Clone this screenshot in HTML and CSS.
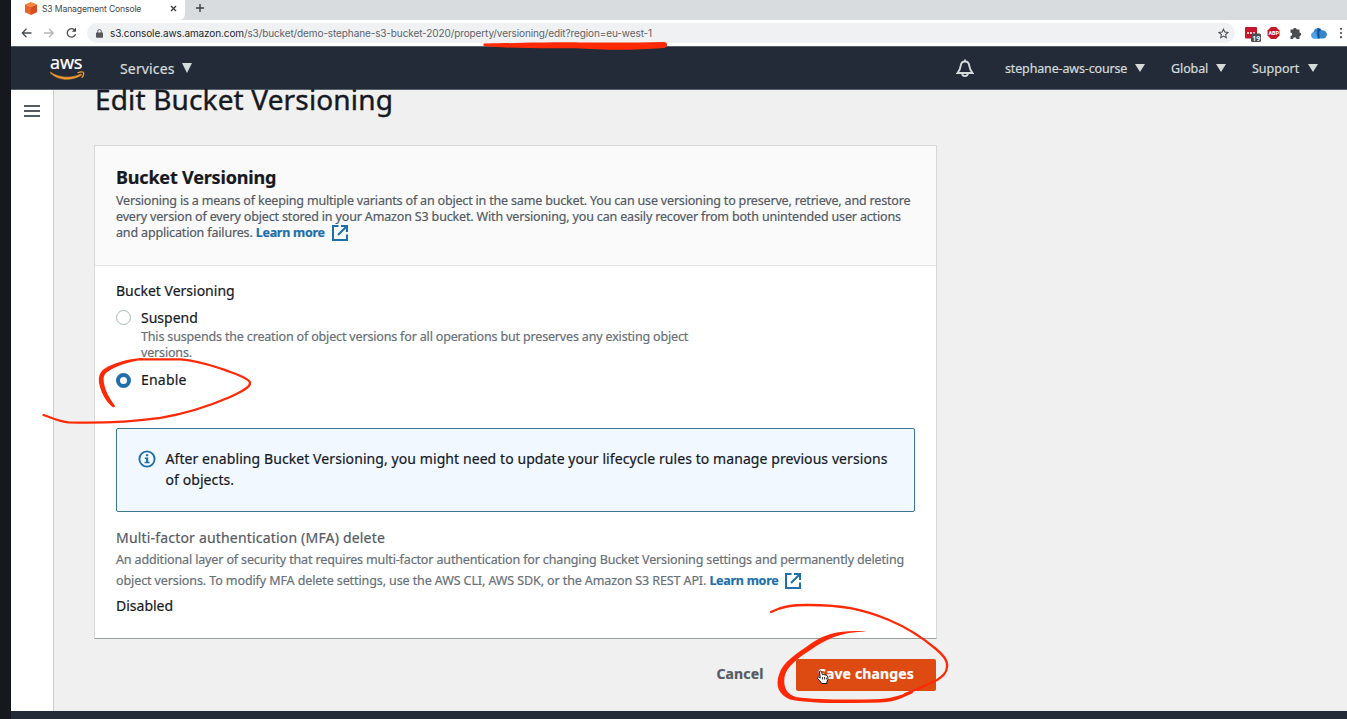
FILE: index.html
```html
<!DOCTYPE html>
<html lang="en">
<head>
<meta charset="utf-8">
<title>S3 Management Console</title>
<link rel="stylesheet" href="styles.css">
</head>
<body>
<div class="screen">
  <header class="browser">
    <div class="tabstrip">
      <div class="tab">
        <svg class="favicon" width="12" height="13" viewBox="0 0 12 13"><path fill="#f58534" d="M6 0l6 2.600L6 5 0 2.600z"/><path fill="#e8622a" d="M0 2.600L6 5v8l-6-2.800z"/><path fill="#d64c1c" d="M12 2.600L6 5v8l6-2.800z"/></svg>
        <span class="tab-title">S3 Management Console</span>
        <svg class="close" width="7" height="7" viewBox="0 0 7 7"><path d="M1 1l5 5M6 1L1 6" stroke="#3c4043" stroke-width="1.400"/></svg>
      </div>
      <svg class="plus" width="10" height="10" viewBox="0 0 10 10"><path d="M5 1v8M1 5h8" stroke="#3c4043" stroke-width="1.400"/></svg>
    </div>
    <div class="toolbar">
      <svg class="nav-icons" width="60" height="14" viewBox="0 0 60 14" fill="none" stroke-width="1.300"><path stroke="#4a4d51" d="M10.500 7H1.500M5.500 2.800L1.300 7l4.200 4.200"/><path stroke="#b4b6b9" d="M23 7h9M28 2.800L32.200 7 28 11.200"/><path stroke="#4a4d51" d="M54 4.300A4.300 4.300 0 1 0 54.600 8.300"/><path fill="#4a4d51" d="M55 1.500v4.300h-4.300z"/></svg>
      <div class="omnibox">
        <svg width="7" height="9" viewBox="0 0 7 9"><rect y="3.500" width="7" height="5.300" rx=".7" fill="#55585c"/><path d="M1.700 4V2.400a1.800 1.800 0 0 1 3.600 0V4" fill="none" stroke="#55585c"/></svg>
        <span class="url"><b>s3.console.aws.amazon.com</b>/s3/bucket/demo-stephane-s3-bucket-2020/property/versioning/edit?region=eu-west-1</span>
        <svg class="star" width="11" height="11" viewBox="0 0 24 24"><path d="M12 2.500l2.900 6.400 7 .7-5.300 4.700 1.500 6.900L12 17.600l-6.100 3.600 1.500-6.900L2.100 9.600l7-.7z" fill="none" stroke="#4a4d51" stroke-width="2.200"/></svg>
      </div>
      <svg class="extensions" width="106" height="20" viewBox="0 0 106 20">
        <rect x="5" y="4" width="12" height="11.500" rx="1" fill="#c4172c"/><path d="M7 10h8" stroke="#fff" stroke-width="1.500" stroke-dasharray="2 1"/>
        <rect x="11" y="10.500" width="10" height="8.500" rx="1.500" fill="#4a4d51"/><text x="12.200" y="17.500" class="badge">19</text>
        <path d="M31 4h5l3.500 3.500v5L36 16h-5l-3.500-3.500v-5z" fill="#c4172c"/><text x="28.400" y="12" class="abp">ABP</text>
        <path d="M50.500 6.500H53a2 2 0 0 1 3.800 0h2.700v3a1.700 1.700 0 0 1 0 3.500v3h-3a1.700 1.700 0 0 0-3.500 0h-2.500v-3a1.700 1.700 0 0 0 0-3.400z" fill="#4a4d51"/>
        <path d="M74 15.500a3.300 3.300 0 0 1-.4-6.400 4.500 4.500 0 0 1 8.300-1.800 3.700 3.700 0 0 1 1.600 8.200z" fill="#3287cf"/><path d="M77.500 4.900q2.200.2 3.600 2.300l-2 1.500.6 6.800h-2.200z" fill="#164f91"/><path d="M74 15.500a3.300 3.300 0 0 1-.4-6.400l1.400-.3 3 6.700z" fill="#4da4e6"/>
        <g fill="#4a4d51"><circle cx="101" cy="5.800" r="1.100"/><circle cx="101" cy="10" r="1.100"/><circle cx="101" cy="14.200" r="1.100"/></g>
      </svg>
    </div>
  </header>
  <nav class="awsnav">
    <div class="logo"><span>aws</span>
      <svg width="35" height="10" viewBox="0 0 35 10"><path d="M.5 1.200C9 7 21 8 31 3l.6 1C21 10.500 8 9.500.2 1.800z" fill="#f29a2e" stroke="#f29a2e" stroke-width=".6"/><path d="M27.500 1.800c2.500-.8 5.500-1 6 0 .4 1-.4 3.500-1.800 5" fill="none" stroke="#f29a2e" stroke-width="1.300"/></svg>
    </div>
    <div class="menu services"><span>Services</span><i class="caret big"></i></div>
    <svg class="bell" width="18" height="19" viewBox="0 0 18 19" fill="none" stroke="#d5dbdb" stroke-width="1.900"><path d="M9 2.500c-2.600 0-4 1.500-4.300 4.300C4.300 10 3.500 11.500 1.500 14h15c-2-2.500-2.800-4-3.200-7.200C13 4 11.600 2.500 9 2.500zM9 .5v2M6.200 14.300a2.800 2.800 0 0 0 5.600 0"/></svg>
    <div class="menu account"><span>stephane-aws-course</span><i class="caret"></i></div>
    <div class="menu region"><span>Global</span><i class="caret"></i></div>
    <div class="menu support"><span>Support</span><i class="caret"></i></div>
  </nav>
  <div class="body">
    <aside class="side"><i></i><i></i><i></i></aside>
    <main>
      <h1>Edit Bucket Versioning</h1>
      <section class="card">
        <div class="card-head">
          <h2>Bucket Versioning</h2>
          <p class="desc">Versioning is a means of keeping multiple variants of an object in the same bucket. You can use versioning to preserve, retrieve, and restore<br><span>every version of every object stored in your Amazon S3 bucket. With versioning, you can easily recover from both unintended user actions<br>and application failures.</span> <a>Learn more</a><svg class="ext" width="16" height="16" viewBox="0 0 16 16"><path d="M6.500 1H1v14h14V9.500M9 1h6v6M14.500 1.500L6 10" fill="none" stroke="#1f6fab" stroke-width="2"/></svg></p>
        </div>
        <div class="card-body">
          <div class="label">Bucket Versioning</div>
          <div class="option suspend"><i class="radio"></i><div>Suspend<p>This suspends the creation of object versions for all operations but preserves any existing object<br>versions.</p></div></div>
          <div class="option enable"><i class="radio on"></i><div>Enable</div></div>
          <div class="info">
            <svg width="18" height="18" viewBox="0 0 18 18"><circle cx="9" cy="9" r="7.600" fill="none" stroke="#1f6fab" stroke-width="1.900"/><path d="M8 4.300h2.200v2H8zM6.800 7.500h3.400v4.200h1.300v1.600H6.600v-1.600H8V9H6.800z" fill="#1f6fab"/></svg>
            <p>After enabling Bucket Versioning, you might need to update your lifecycle rules to manage previous versions<br>of objects.</p>
          </div>
          <div class="mfa">Multi-factor authentication (MFA) delete</div>
          <p class="mfa-desc">An additional layer of security that requires multi-factor authentication for changing Bucket Versioning settings and permanently deleting<br><span>object versions. To modify MFA delete settings, use the AWS CLI, AWS SDK, or the Amazon S3 REST API.</span> <a>Learn more</a><svg class="ext" width="16" height="16" viewBox="0 0 16 16"><path d="M6.500 1H1v14h14V9.500M9 1h6v6M14.500 1.500L6 10" fill="none" stroke="#1f6fab" stroke-width="2"/></svg></p>
          <div class="state">Disabled</div>
        </div>
      </section>
      <div class="actions"><span class="cancel">Cancel</span><button>Save changes</button></div>
    </main>
  </div>
  <footer></footer>
</div>
<svg class="ink" width="1347" height="719" viewBox="0 0 1347 719">
  <path class="cursor" d="M819.500 671.500c.8-.8 2-.3 2.200.6l.8 2.700 1.200-.4 1.300.6 1.300-.1.700 1 .9.800v3l-1 2v1.800h-5.200l-2-2.800-2.200-2.400c-.2-1.200.8-1.600 1.700-.9l1 .7z"/>
  <path class="knuckles" d="M822.500 677v2.500M824.500 677v2.500M826.300 677.500v2"/>
  <path class="fill" d="M484 43.600C520 43 545 42.200 580 42.400c30 .3 55 .3 84-.3 4 0 4 5.400 0 5.800-18 1-35 2.200-54 1.800-20-.3-30-1.500-50-1.400-26 .1-52-.3-75-2-2-.4-2-2.500-1-2.700z"/>
  <path class="thin" d="M43.500 415c9 3 16 6.600 25 7.300 32 1.200 60-.3 92-4.500 26-4 48-11.500 69-20.500 14-6.500 21-10.500 20.500-14.500-1-5-17-9.500-27-13.500-14-4.500-24-8.500-42-10H140"/>
  <path class="fill" d="M142 358c-15 1-29 5-38 11-5 4-6 9-4.500 16 2 9 7 17 13 22 2 1 3-.5 2-2-5-7-9-13-10.500-22-1-6 0-9 4-11.500 9-6 20-9.500 34-11.500z"/>
  <path class="thin" d="M771 612c12-6 22-7 36-7 36-.2 56 4.500 82 15 18 7.500 34 18 47 29 8 7 12 12 11 18-.5 6-4 9-10 13-10 5-20 9.500-32 14"/>
  <path class="fill" d="M867 631.500c-24-1.500-39 .5-56 12-14 10-28 18-32 31-4 12 0 20 11 25 20 4 48 4 78 3.200 12 .3 22-.2 30-3.200 6-2.500 11-4.500 15-6.500l-1-2c-16 6-22 7.500-36 8.300-32 .4-60 .5-80-2.300-9-3-13-9-11.500-20 2-10 12-18 26-27 16-11 30-18 56.500-18.500z"/>
</svg>
</body>
</html>
```
FILE: styles.css
```css
*{box-sizing:border-box}
body{margin:0;background:#15191d;font-family:"Noto Sans","Open Sans",sans-serif;color:#16191f;white-space:nowrap}
i{display:block;flex:none}
svg{flex:none}
p,h1,h2{margin:0}
.screen{height:719px;margin-left:11px;display:flex;flex-direction:column;overflow:hidden}
.browser{height:46px;background:#fff;flex:none;font-family:Inter,sans-serif}
.tabstrip{height:20px;background:#d9dcdf;display:flex}
.tab{width:174px;background:#fff;display:flex;align-items:center;padding:0 8px 3px 14px;border-radius:0 0 6px 0}
.tab-title{font-size:8.600px;letter-spacing:-.14px;margin-left:5px;color:#45484c;flex:1}
.plus{margin:3px 0 0 10px}
.toolbar{height:26px;display:flex;align-items:center}
.nav-icons{margin-left:10px}
.omnibox{margin-left:6px;width:1148px;height:20px;border-radius:10px;background:#eff1f3;display:flex;align-items:center;padding:0 6px 0 9px}
.url{font-size:10px;letter-spacing:-.111px;margin-left:7px;color:#5f6368}
.url b{font-weight:400;color:#25282c}
.star{margin-left:auto}
.extensions{margin-left:5px}
.badge{font:700 7px Roboto;fill:#fff}
.abp{font:700 5.500px Roboto;fill:#fff}
.awsnav{height:44px;background:#232b38;border-top:1px solid #59616b;border-bottom:1px solid #59616b;display:flex;align-items:center;flex:none;color:#d5dbdb;font-size:12.500px;padding:0 29px 0 0;-webkit-text-stroke:.2px}
.menu{display:flex;align-items:center;justify-content:space-between}
.caret{border:5px solid transparent;border-top:8px solid #d5dbdb;border-bottom:0}
.caret.big{border-width:10px 5.500px 0}
.logo{width:35px;margin-left:39px;color:#fff;font-size:18px;line-height:17px;letter-spacing:-.2px}
.logo svg{display:block;margin-top:-2px}
.logo span{display:block;position:relative;top:-2px}
.services{width:72px;margin-left:35px;font-size:14px;letter-spacing:.15px}
.bell{margin-left:auto}
.account{width:140px;margin-left:31px;letter-spacing:-.15px}
.region{width:55px;margin-left:26px;letter-spacing:-.1px}
.support{width:66px;margin-left:26px}
.body{flex:1;background:#f0f0f0;display:flex;min-height:0}
.side{width:43px;background:#fff;border-right:1px solid #ccc;padding:15px 0 0 13px}
.side i{width:16px;height:2px;background:#545b64;margin-bottom:3px}
main{padding-left:40px;-webkit-text-stroke:.2px}
h1{font-size:28px;font-weight:400;line-height:32px;height:62px;margin:-7px 0 0 1px;letter-spacing:.15px;-webkit-text-stroke:.4px}
.card{width:843px;height:494px;background:#fff;border:1px solid #d5d8d8;border-bottom-color:#9aa0a0}
.card-head{height:120px;background:#fafafa;border-bottom:1px solid #e6e8e8;padding:19px 21px}
h2{font-size:18px;line-height:24px;letter-spacing:-.19px}
.desc{font-size:12.500px;line-height:16px;color:#545b64;letter-spacing:-.178px;margin-top:4px}
.desc span{letter-spacing:-.158px}
.ext{vertical-align:middle;margin:-6px 0 -5px 7px}
a,.desc a{color:#1f6fab;font-weight:700;letter-spacing:-.27px}
.card-body{padding:15px 21px;font-size:14px;line-height:20px}
.option{display:flex;gap:10px}
.suspend{margin-top:7px}
.enable{margin-top:9px;letter-spacing:.2px}
.option p{font-size:12.500px;line-height:16px;color:#687078;letter-spacing:-.165px;margin-top:1px}
.radio{width:15px;height:15px;border:1px solid #aab7b8;border-radius:50%;margin-top:2px}
.radio.on{border:4.500px solid #1f6fab;margin-top:3px}
.info{width:799px;height:84px;background:#f1f8ff;border:1px solid #3c7691;border-radius:2px;display:flex;gap:9.500px;padding:19px 21px;margin-top:38px;line-height:21px;letter-spacing:.081px}
.info svg{margin-top:2px}
.mfa{color:#545b64;margin-top:16px;letter-spacing:.186px}
.mfa-desc{font-size:12.500px;line-height:21px;color:#687078;letter-spacing:-.138px;margin-top:1px}
.mfa-desc span{letter-spacing:-.1px}
.state{margin-top:5px}
.actions{width:842px;margin-top:20px;display:flex;justify-content:flex-end;gap:32.500px;font-size:14px;line-height:20px;font-weight:700;align-items:center;letter-spacing:.13px}
.cancel{color:#545b64;padding-bottom:2px}
button{width:140px;height:32px;background:#dd4b12;border:0;border-radius:2px;color:#fff;font:inherit;letter-spacing:inherit;padding:0 0 2px}
footer{height:8px;background:#232b38}
.ink{position:absolute;left:0;top:0;pointer-events:none}
.ink .fill{fill:#ff2a05}
.ink .thin{fill:none;stroke:#ff2a05;stroke-width:2.300;stroke-linecap:round;stroke-linejoin:round}
.cursor{fill:#fff;stroke:#111;stroke-width:1}
.knuckles{fill:none;stroke:#111;stroke-width:.8}
```
